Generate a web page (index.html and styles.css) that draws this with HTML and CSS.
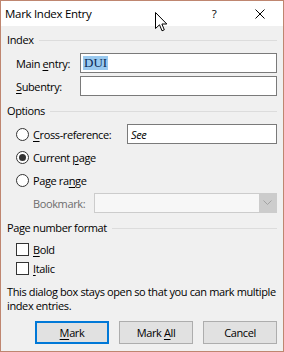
FILE: index.html
```html
<!DOCTYPE html>
<html lang="en">

<head>
    <meta charset="UTF-8">
    <title>Mark Index Entry</title>
    <link rel="stylesheet" href="styles.css">
</head>

<body>
    <div class="window">
        <div class="titlebar">
            <span class="title">Mark Index Entry</span>
            <span class="title-btn">?</span>
            <span class="title-btn">
                <svg width="10" height="10" viewBox="0 0 10 10">
                    <path d="M0.5 0.5 L9.5 9.5 M9.5 0.5 L0.5 9.5" stroke="#000" stroke-width="1" fill="none" />
                </svg>
            </span>
        </div>

        <div class="dialog-body">
            <div class="group-head">Index</div>
            <div class="field-row first">
                <span class="field-label">Main <u>e</u>ntry:</span>
                <div class="textbox"><span class="selected">DUI</span></div>
            </div>
            <div class="field-row">
                <span class="field-label"><u>S</u>ubentry:</span>
                <div class="textbox"></div>
            </div>

            <div class="group-head spaced">Options</div>
            <div class="option-row first">
                <span class="radio"></span>
                <span class="option-label wide"><u>C</u>ross-reference:</span>
                <div class="textbox"><span class="see">See</span></div>
            </div>
            <div class="option-row">
                <span class="radio checked"></span>
                <span class="option-label">Current <u>p</u>age</span>
            </div>
            <div class="option-row">
                <span class="radio"></span>
                <span class="option-label">Page ra<u>n</u>ge</span>
            </div>
            <div class="option-row bookmark-row">
                <span class="disabled-label">Bookmark:</span>
                <div class="combo">
                    <div class="combo-btn">
                        <svg width="9" height="6" viewBox="0 0 9 6">
                            <path d="M0.5 0.5 L4.5 4.5 L8.5 0.5" stroke="#a3a3a3" stroke-width="1" fill="none" />
                        </svg>
                    </div>
                </div>
            </div>

            <div class="group-head spaced">Page number format</div>
            <div class="check-row first">
                <span class="checkbox"></span>
                <span class="option-label"><u>B</u>old</span>
            </div>
            <div class="check-row">
                <span class="checkbox"></span>
                <span class="option-label"><u>I</u>talic</span>
            </div>

            <p class="note">This dialog box stays open so that you can mark multiple index entries.</p>

            <div class="button-row">
                <button class="dlg-button default"><u>M</u>ark</button>
                <button class="dlg-button">Mark <u>A</u>ll</button>
                <button class="dlg-button">Cancel</button>
            </div>
        </div>

        <!-- mouse pointer sitting over the title bar -->
        <svg class="pointer" width="13" height="21" viewBox="0 0 13 21">
            <path d="M0.5 0.5 L0.5 16.5 L4.5 12.8 L7 18.8 L9.3 17.8 L6.9 12 L11.8 12 Z" fill="#fff" stroke="#000"
                stroke-width="1" stroke-linejoin="miter" />
        </svg>
    </div>
</body>

</html>
```

FILE: styles.css
```css
:root {
    --frame-color: #bf8670;
    --dialog-bg: #f0f0f0;
    --text-color: #000000;
    --line-color: #dcdcdc;
    --field-border: #7a7a7a;
    --disabled-text: #6d6d6d;
    --accent: #0078d7;
}

* {
    box-sizing: border-box;
    margin: 0;
    padding: 0;
}

body {
    font-family: 'Open Sans', 'Liberation Sans', sans-serif;
    font-size: 11px;
    letter-spacing: -0.38px;
    color: var(--text-color);
    background: #ffffff;
}

.window {
    position: relative;
    width: 284px;
    height: 352px;
    border: 1px solid var(--frame-color);
    background-color: var(--dialog-bg);
    display: flex;
    flex-direction: column;
}

.titlebar {
    height: 25px;
    background: #ffffff;
    display: flex;
    align-items: center;
    font-size: 11.5px;
    letter-spacing: -0.3px;
}

.title {
    flex: 1;
    padding-left: 4px;
}

.title-btn {
    width: 46px;
    height: 25px;
    display: flex;
    align-items: center;
    justify-content: center;
}

.dialog-body {
    flex: 1;
    padding: 7px 6px 0 6px;
    display: flex;
    flex-direction: column;
}

u {
    text-decoration: underline;
    text-underline-offset: 2px;
}

.group-head {
    height: 14px;
    line-height: 14px;
    display: flex;
    align-items: center;
}

.group-head::after {
    content: '';
    flex: 1;
    height: 1px;
    margin-left: 5px;
    background: var(--line-color);
}

.group-head.spaced {
    margin-top: 8px;
}

.field-row,
.option-row {
    height: 20px;
    display: flex;
    align-items: center;
    margin-top: 3px;
}

.field-row.first,
.option-row.first {
    margin-top: 6px;
}

.field-label {
    width: 64px;
    margin-left: 9px;
}

.textbox {
    flex: 1;
    height: 20px;
    background: #ffffff;
    border: 1px solid var(--field-border);
    display: flex;
    align-items: center;
    padding-left: 2px;
}

.selected {
    font-family: 'Liberation Serif', 'Times New Roman', serif;
    font-size: 13px;
    line-height: 14px;
    letter-spacing: 0;
    background: #99c9ef;
    color: #0b2a55;
    padding: 0 1px;
}

.see {
    font-style: italic;
    padding-left: 1px;
}

.radio,
.checkbox {
    width: 13px;
    height: 13px;
    margin-left: 9px;
    margin-right: 4px;
    border: 1px solid #333333;
    background: #ffffff;
    flex-shrink: 0;
    display: flex;
    align-items: center;
    justify-content: center;
}

.radio {
    border-radius: 50%;
}

.radio.checked::after {
    content: '';
    width: 7px;
    height: 7px;
    border-radius: 50%;
    background: #333333;
}

.option-label.wide {
    width: 94px;
}

.bookmark-row {
    padding-left: 26px;
}

.disabled-label {
    color: var(--disabled-text);
    width: 61px;
}

.combo {
    flex: 1;
    height: 20px;
    border: 1px solid #cccccc;
    background: #f7f7f7;
    display: flex;
    justify-content: flex-end;
}

.combo-btn {
    width: 17px;
    background: #cccccc;
    display: flex;
    align-items: center;
    justify-content: center;
}

.check-row {
    height: 19px;
    display: flex;
    align-items: center;
}

.check-row.first {
    margin-top: 5px;
}

.note {
    margin-top: 7px;
    line-height: 14px;
}

.button-row {
    margin-top: 8px;
    display: flex;
    justify-content: flex-end;
    gap: 10px;
}

.dlg-button {
    width: 74px;
    height: 23px;
    font-family: inherit;
    font-size: inherit;
    letter-spacing: inherit;
    color: var(--text-color);
    background: #e1e1e1;
    border: 1px solid #adadad;
}

.dlg-button.default {
    border: 2px solid var(--accent);
}

.pointer {
    position: absolute;
    left: 154px;
    top: 11px;
}
```
